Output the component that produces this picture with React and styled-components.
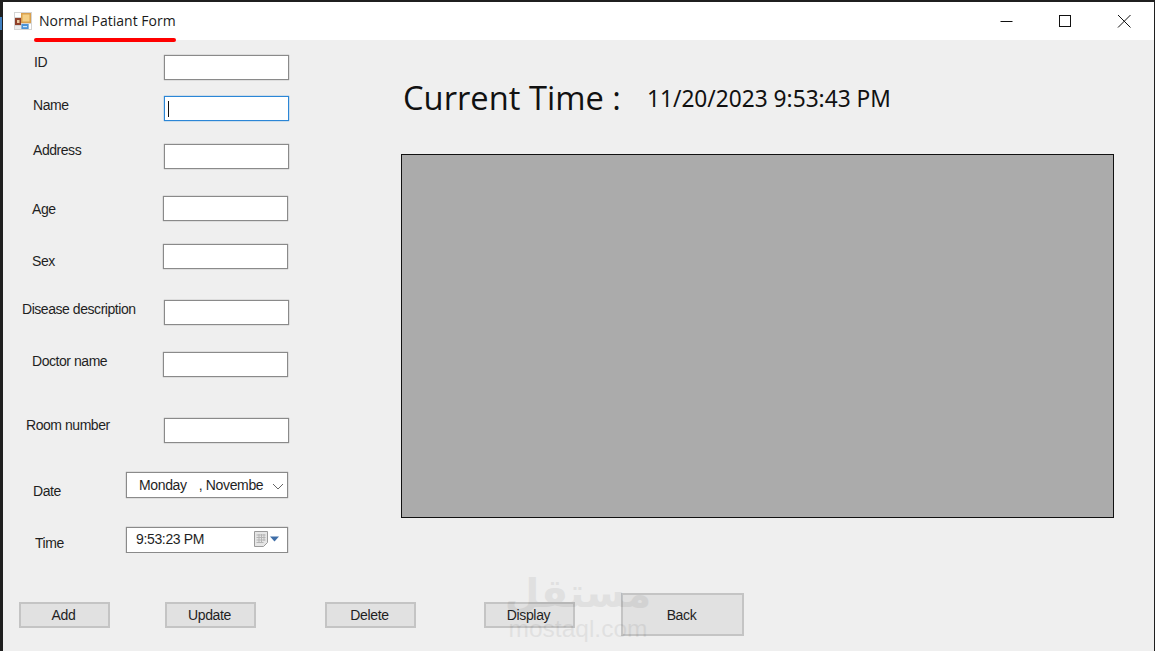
import React from 'react';
import styled, { createGlobalStyle } from 'styled-components';

const fields = [
  { name: 'ID', gap: 15, x: 34, lift: 0, inputX: 164 },
  { name: 'Name', gap: 16, x: 33, lift: 2, inputX: 164, focused: true },
  { name: 'Address', gap: 23, x: 33, lift: -1, inputX: 164 },
  { name: 'Age', gap: 27, x: 32, lift: 6, inputX: 163 },
  { name: 'Sex', gap: 23, x: 32, lift: 10, inputX: 163 },
  { name: 'Disease description', gap: 31, x: 22, lift: 2, inputX: 164 },
  { name: 'Doctor name', gap: 27, x: 32, lift: 2, inputX: 163 },
  { name: 'Room number', gap: 41, x: 26, lift: 0, inputX: 164 },
];

const buttons = [
  { name: 'Add', gap: 16 },
  { name: 'Update', gap: 55 },
  { name: 'Delete', gap: 69 },
  { name: 'Display', gap: 68 },
];

export default function App() {
  return (
    <Window>
      <GlobalStyle />
      <EdgeMark />
      <TitleBar>
        <AppIcon viewBox="0 0 18 18">
          <rect x="0" y="0" width="18" height="18" fill="#d4d4d4" />
          <rect x="1" y="1" width="6" height="4" fill="#fff" />
          <rect x="7" y="1" width="10" height="10" fill="#d9a04e" />
          <rect x="8.500" y="2.500" width="7" height="7" fill="#f4cf86" />
          <rect x="1" y="6" width="6" height="7" fill="#8f3f2a" />
          <rect x="3" y="8" width="2.500" height="3" fill="#e9c9a0" />
          <rect x="7.500" y="12" width="7" height="5" fill="#4b93d8" />
          <rect x="9" y="14" width="4" height="1.200" fill="#cfe6fa" />
          <rect x="15" y="12" width="2" height="5" fill="#fff" />
          <rect x="1" y="14" width="6" height="3" fill="#ececec" />
        </AppIcon>
        <TitleText>Normal Patiant Form</TitleText>
        <WindowControls>
          <ControlIcon viewBox="0 0 14 14">
            <path d="M1.500 7.500h12" />
          </ControlIcon>
          <ControlIcon viewBox="0 0 14 14">
            <rect x="1.500" y="1.500" width="11" height="11" />
          </ControlIcon>
          <ControlIcon viewBox="0 0 14 14">
            <path d="M1 1l12.500 12.500M13.500 1L1 13.500" />
          </ControlIcon>
        </WindowControls>
        <TitleMark />
      </TitleBar>

      <Content>
        <FieldColumn>
          {fields.map((f) => (
            <FieldRow key={f.name} $gap={f.gap} $inputX={f.inputX}>
              <FieldLabel $x={f.x} $lift={f.lift}>{f.name}</FieldLabel>
              <TextBox $focused={f.focused}>{f.focused && <Caret />}</TextBox>
            </FieldRow>
          ))}
          <FieldRow $gap={29} $inputX={126}>
            <FieldLabel $x={33} $lift={12}>Date</FieldLabel>
            <Picker $raise={1}>
              <PickerValue $x={12}>Monday</PickerValue>
              <PickerValue $x={12}>, Novembe</PickerValue>
              <Chevron viewBox="0 0 12 7">
                <path d="M1 1l5 5 5-5" />
              </Chevron>
            </Picker>
          </FieldRow>
          <FieldRow $gap={28} $inputX={126}>
            <FieldLabel $x={35} $lift={9}>Time</FieldLabel>
            <Picker $raise={2}>
              <PickerValue $x={9}>9:53:23 PM</PickerValue>
              <CalendarIcon viewBox="0 0 25 16">
                <path d="M0.500 0.500h13v11l-4 4h-9z" fill="#e6e6e6" stroke="#9a9a9a" />
                <path d="M2.500 4h9M2.500 6.500h9M2.500 9h9M2.500 11.500h7M5 3v9M7.500 3v9M10 3v7" stroke="#b5b5b5" fill="none" />
                <path d="M16 5.500h9l-4.500 5z" fill="#3f6ea8" />
              </CalendarIcon>
            </Picker>
          </FieldRow>
        </FieldColumn>

        <TimePanel>
          <ClockRow>
            <ClockLabel>Current Time :</ClockLabel>
            <ClockValue>11/20/2023 9:53:43 PM</ClockValue>
          </ClockRow>
          <GridView />
        </TimePanel>
      </Content>

      <ButtonRow>
        {buttons.map((b) => (
          <ActionButton key={b.name} $gap={b.gap}>{b.name}</ActionButton>
        ))}
        <BackButton>Back</BackButton>
        <Watermark>
          <WatermarkArabic>مستقل</WatermarkArabic>
          <WatermarkLatin>mostaql.com</WatermarkLatin>
        </Watermark>
      </ButtonRow>
    </Window>
  );
}

const GlobalStyle = createGlobalStyle`
  html, body {
    margin: 0;
    padding: 0;
    overflow: hidden;
    background: #1f1f1f;
  }
`;

const Window = styled.div`
  position: relative;
  box-sizing: border-box;
  width: 1155px;
  height: 651px;
  padding: 2px 1px 0 3px;
  display: flex;
  flex-direction: column;
  background: #1f1f1f;
  font-family: "Liberation Sans", Arial, sans-serif;
  color: #111;
  overflow: hidden;
`;

const EdgeMark = styled.div`
  position: absolute;
  left: 0;
  top: 17px;
  width: 2px;
  height: 13px;
  background: #3f7fc0;
`;

const TitleBar = styled.div`
  position: relative;
  flex: none;
  height: 38px;
  display: flex;
  align-items: center;
  padding-left: 11px;
  background: #fff;
`;

const AppIcon = styled.svg`
  width: 18px;
  height: 18px;
  margin-right: 7px;
`;

const TitleText = styled.div`
  padding-bottom: 2px;
  font-family: "Open Sans", sans-serif;
  font-size: 14px;
  color: #1a1a1a;
  white-space: nowrap;
`;

const TitleMark = styled.div`
  position: absolute;
  left: 31px;
  top: 36px;
  width: 142px;
  height: 4px;
  border-radius: 2px;
  background: #ff0000;
`;

const WindowControls = styled.div`
  margin-left: auto;
  display: flex;
  align-items: center;
  gap: 45px;
  padding-right: 23px;
`;

const ControlIcon = styled.svg`
  width: 14px;
  height: 14px;
  fill: none;
  stroke: #111;
  stroke-width: 1;
`;

const Content = styled.div`
  flex: none;
  display: flex;
  background: #efefef;
`;

const FieldColumn = styled.div`
  flex: none;
  width: 401px;
  margin-left: -3px;
  display: flex;
  flex-direction: column;
`;

const FieldRow = styled.div`
  display: grid;
  grid-template-columns: ${(p) => p.$inputX}px auto;
  justify-content: start;
  align-items: start;
  margin-top: ${(p) => p.$gap}px;
`;

const FieldLabel = styled.div`
  padding-left: ${(p) => p.$x}px;
  margin-top: ${(p) => p.$lift}px;
  font-size: 14px;
  line-height: 15px;
  letter-spacing: -0.45px;
  color: #1f1f1f;
  white-space: nowrap;
`;

const TextBox = styled.div`
  box-sizing: border-box;
  width: 125px;
  height: 25px;
  display: flex;
  align-items: center;
  padding-left: 3px;
  background: #fff;
  border: 1px solid ${(p) => (p.$focused ? '#2b86d6' : '#8a8a8a')};
  box-shadow: 0 0 1px ${(p) => (p.$focused ? '#2b86d6' : '#8a8a8a')};
`;

const Caret = styled.div`
  width: 1px;
  height: 16px;
  background: #111;
`;

const Picker = styled.div`
  box-sizing: border-box;
  width: 162px;
  height: 26px;
  display: flex;
  align-items: center;
  background: #fff;
  border: 1px solid #8a8a8a;
  box-shadow: 0 0 1px #8a8a8a;
  padding-bottom: ${(p) => p.$raise}px;
`;

const PickerValue = styled.span`
  margin-left: ${(p) => p.$x}px;
  font-size: 14px;
  letter-spacing: -0.35px;
  color: #1f1f1f;
  white-space: nowrap;
`;

const Chevron = styled.svg`
  width: 12px;
  height: 7px;
  margin-left: auto;
  margin-right: 3px;
  margin-top: 3px;
  fill: none;
  stroke: #666;
  stroke-width: 1;
`;

const CalendarIcon = styled.svg`
  width: 25px;
  height: 16px;
  margin-left: auto;
  margin-right: 8px;
`;

const TimePanel = styled.div`
  flex: 1;
  display: flex;
  flex-direction: column;
  padding-right: 40px;
`;

const ClockRow = styled.div`
  height: 114px;
  display: flex;
  align-items: center;
  padding-left: 2px;
`;

const ClockLabel = styled.div`
  width: 244px;
  font-family: "Open Sans", sans-serif;
  font-size: 32.700px;
  color: #111;
  white-space: nowrap;
`;

const ClockValue = styled.div`
  padding-top: 3px;
  font-family: "Noto Sans", sans-serif;
  font-size: 22.700px;
  color: #111;
  white-space: nowrap;
`;

const GridView = styled.div`
  box-sizing: border-box;
  height: 364px;
  background: #ababab;
  border: 1px solid #111;
`;

const ButtonRow = styled.div`
  position: relative;
  flex: 1;
  padding-top: 40px;
  display: flex;
  align-items: flex-start;
  background: #efefef;
`;

const ActionButton = styled.div`
  box-sizing: border-box;
  width: 91px;
  height: 26px;
  margin-top: 9px;
  margin-left: ${(p) => p.$gap}px;
  padding-right: 2px;
  display: flex;
  align-items: center;
  justify-content: center;
  background: #e1e1e1;
  border: 2px solid #c4c4c4;
  font-size: 14px;
  letter-spacing: -0.35px;
  color: #1f1f1f;
`;

const BackButton = styled(ActionButton)`
  width: 123px;
  height: 43px;
  margin-top: 0;
  margin-left: 46px;
`;

const Watermark = styled.div`
  position: absolute;
  left: 502px;
  top: 18px;
  width: 146px;
  display: flex;
  flex-direction: column;
  align-items: center;
  color: #000;
  opacity: 0.06;
  pointer-events: none;
`;

const WatermarkArabic = styled.div`
  font-family: "DejaVu Sans", sans-serif;
  font-size: 40px;
  font-weight: 700;
  line-height: 44px;
`;

const WatermarkLatin = styled.div`
  margin-top: 4px;
  font-family: "Liberation Sans", sans-serif;
  font-size: 24.500px;
  line-height: 20px;
`;
